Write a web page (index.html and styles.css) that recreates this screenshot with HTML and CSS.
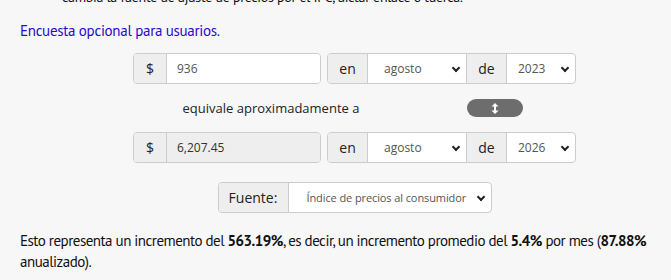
FILE: index.html
```html
<!DOCTYPE html>
<html lang="es">
<head>
    <meta charset="UTF-8">
    <meta name="viewport" content="width=device-width, initial-scale=1.0">
    <title>Calculadora de inflación</title>
    <link rel="stylesheet" href="styles.css">
</head>
<body>
    <div class="container">
        <ul class="notes">
            <li>cambia la fuente de ajuste de precios por el IPC, dictar enlace ó tuerca.</li>
        </ul>
        <p class="survey"><a href="#">Encuesta opcional para usuarios.</a></p>

        <div class="calc">
            <div class="row">
                <div class="group group-amount">
                    <span class="addon addon-money">$</span>
                    <input type="text" class="field" value="936">
                </div>
                <div class="group group-date">
                    <span class="addon addon-word">en</span>
                    <div class="select select-month">agosto<span class="chev"></span></div>
                    <span class="addon addon-word">de</span>
                    <div class="select select-year">2023<span class="chev"></span></div>
                </div>
            </div>

            <div class="row row-middle">
                <div class="equiv">equivale aproximadamente a</div>
                <button class="swap" title="Intercambiar">
                    <svg width="8" height="11" viewBox="0 0 8 11">
                        <path d="M4 0 L7.5 3.5 H5 V7.5 H7.5 L4 11 L0.5 7.5 H3 V3.5 H0.5 Z" fill="#fff"/>
                    </svg>
                </button>
            </div>

            <div class="row">
                <div class="group group-amount">
                    <span class="addon addon-money">$</span>
                    <input type="text" class="field field-result" value="6,207.45" disabled>
                </div>
                <div class="group group-date">
                    <span class="addon addon-word">en</span>
                    <div class="select select-month">agosto<span class="chev"></span></div>
                    <span class="addon addon-word">de</span>
                    <div class="select select-year">2026<span class="chev"></span></div>
                </div>
            </div>

            <div class="row row-source">
                <div class="group group-source">
                    <span class="addon addon-source">Fuente:</span>
                    <div class="select select-source">Índice de precios al consumidor<span class="chev"></span></div>
                </div>
            </div>
        </div>

        <p class="summary">Esto representa un incremento del <b>563.19%</b>, es decir, un incremento promedio del <b>5.4%</b> por mes (<b>87.88%</b> anualizado).</p>
    </div>
</body>
</html>
```

FILE: styles.css
```css
body {
    margin: 0;
    background-color: #f7f7f7;
    font-family: "PT Sans", Roboto, sans-serif;
    color: #111;
}
.container {
    padding: 0 20px;
}
.notes {
    margin: -12px 0 0;
    padding-left: 42px;
    list-style: none;
    font-size: 14px;
    line-height: 18px;
    letter-spacing: -0.3px;
}
.survey {
    margin: 15px 0 0;
    font-size: 15px;
    line-height: 20px;
    letter-spacing: -0.3px;
}
.survey a {
    color: #2a0acb;
    text-decoration: none;
}
.calc {
    margin: 12px 0 0 113px;
    width: 443px;
    font-family: "Open Sans", sans-serif;
}
.row {
    display: flex;
    gap: 6px;
}
.group {
    display: flex;
    height: 31px;
    border: 1px solid #ccc;
    border-radius: 4px;
    box-sizing: border-box;
    background-color: #fff;
    overflow: hidden;
}
.addon {
    display: flex;
    align-items: center;
    justify-content: center;
    background-color: #eee;
    border-right: 1px solid #ccc;
    font-size: 14px;
    color: #222;
}
.addon-money {
    width: 32px;
}
.addon-word {
    width: 39px;
    border-left: 1px solid #ccc;
}
.addon-word:first-child {
    border-left: none;
}
.addon-source {
    width: 69px;
    font-size: 14px;
}
.group-amount {
    width: 188px;
}
.group-date {
    width: 249px;
}
.field {
    width: 0;
    flex: 1;
    border: none;
    padding: 0 10px;
    font-family: "Open Sans", sans-serif;
    font-size: 12px;
    color: #555;
    background-color: #fff;
    outline: none;
}
.field-result {
    background-color: #eee;
    color: #333;
}
.select {
    position: relative;
    display: flex;
    align-items: center;
    padding-left: 16px;
    font-size: 12px;
    color: #555;
    box-sizing: border-box;
}
.select-month {
    width: 98px;
}
.select-year {
    flex: 1;
    padding-left: 11px;
}
.select-source {
    flex: 1;
    padding-left: 18px;
    font-size: 11px;
    letter-spacing: -0.1px;
}
.chev {
    position: absolute;
    right: 7px;
    top: 11px;
    width: 4px;
    height: 4px;
    border-right: 2px solid #222;
    border-bottom: 2px solid #222;
    transform: rotate(45deg);
}
.row-middle {
    height: 48px;
    align-items: center;
}
.equiv {
    width: 276px;
    text-align: center;
    font-size: 13px;
    color: #222;
}
.swap {
    margin-left: 52px;
    width: 56px;
    height: 18px;
    border: none;
    border-radius: 9px;
    background-color: #6d6d6d;
    display: flex;
    align-items: center;
    justify-content: center;
    padding: 0;
}
.row-source {
    margin-top: 19px;
    justify-content: center;
}
.group-source {
    width: 274px;
}
.summary {
    margin: 17px 0 0;
    font-size: 15px;
    line-height: 21px;
    letter-spacing: -0.5px;
}
```
